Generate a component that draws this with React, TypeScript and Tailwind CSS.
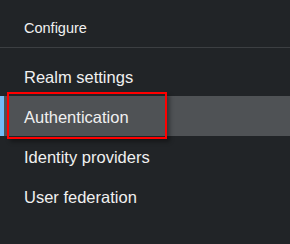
import React from "react";

const items = ["Realm settings", "Authentication", "Identity providers", "User federation"];

export default function App() {
  return (
    <div
      className="w-[290px] h-[244px] bg-[#212427] text-[#f0f0f0] relative overflow-hidden"
      style={{ fontFamily: '"Liberation Sans", Arial, sans-serif' }}
    >
      <div className="h-[47px] flex items-center pl-[24px] pt-[10px] text-[14.5px] text-[#f0f0f0]">Configure</div>
      <div className="h-px bg-[#3c3f42]" />
      <div className="pt-[8px] flex flex-col">
        {items.map((t) => {
          const active = t === "Authentication";
          return (
            <div
              key={t}
              className={
                "h-[40px] flex items-center pl-[24px] pt-[3px] text-[16.5px] relative " +
                (active ? "bg-[#4f5255]" : "")
              }
            >
              {active && <div className="absolute left-0 top-0 bottom-0 w-[4px] bg-[#73bcf7]" />}
              {t}
            </div>
          );
        })}
      </div>
      <div className="absolute left-[7px] top-[92px] w-[160px] h-[47px] border-2 border-[#ff0000] shadow-[3px_3px_4px_rgba(0,0,0,0.35)]" />
    </div>
  );
}
